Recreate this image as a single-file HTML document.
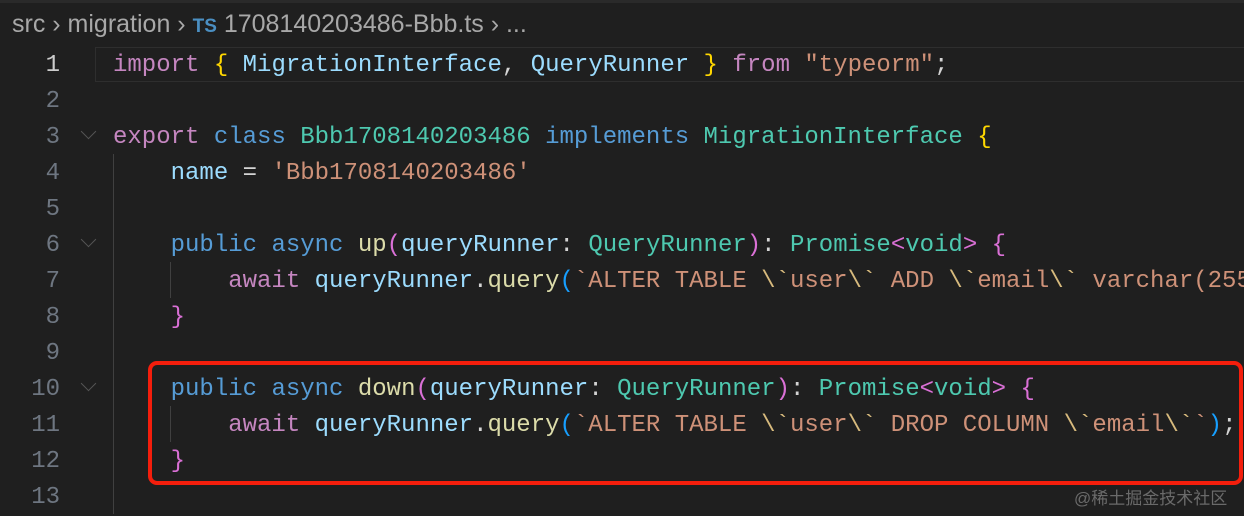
<!DOCTYPE html><html><head><style>
body{margin:0;width:1244px;height:514px;background:#1f1f1f;overflow:hidden;position:relative;font-family:"Liberation Mono",monospace}
.bc{position:absolute;left:12px;top:10px;font:25px "Liberation Sans",sans-serif;color:#a8a8a8;white-space:pre}
.ts{color:#4b8fc2;font-weight:bold;font-size:19px}
.ln{position:absolute;left:0;width:60px;text-align:right;font-size:24px;color:#6e7681;line-height:36px}
.code{position:absolute;left:113px;font-size:24px;line-height:36px;white-space:pre;color:#d4d4d4}
.k{color:#c586c0}.b{color:#569cd6}.t{color:#4ec9b0}.v{color:#9cdcfe}.f{color:#dcdcaa}.s{color:#ce9178}.y{color:#ffd700}.p{color:#da70d6}.q{color:#179fff}.e{color:#d7ba7d}
.guide{position:absolute;width:1px;background:#404040}
.chev{position:absolute;left:83px;width:10px;height:10px;border-right:1.5px solid #555;border-bottom:1.5px solid #555;transform:rotate(45deg)}
</style></head><body>
<div style="position:absolute;left:0;top:0;width:1244px;height:3px;background:#2a2a2a"></div>
<div class="bc">src › migration › <span class="ts">TS</span> 1708140203486-Bbb.ts › ...</div>
<div style="position:absolute;left:95px;top:47px;width:1149px;height:33px;border:1px solid #2e2e2e"></div>
<div class="ln" style="top:48px"><span style="color:#ccc">1</span><br>2<br>3<br>4<br>5<br>6<br>7<br>8<br>9<br>10<br>11<br>12<br>13</div>
<div class="chev" style="top:126px"></div><div class="chev" style="top:234px"></div><div class="chev" style="top:378px"></div>
<div class="guide" style="left:113px;top:154px;height:360px"></div>
<div class="guide" style="left:170px;top:262px;height:36px"></div>
<div class="guide" style="left:170px;top:406px;height:36px"></div>
<div class="code" style="top:48px"><span class="k">import</span> <span class="y">{</span> <span class="v">MigrationInterface</span>, <span class="v">QueryRunner</span> <span class="y">}</span> <span class="k">from</span> <span class="s">"typeorm"</span>;

<span class="k">export</span> <span class="b">class</span> <span class="t">Bbb1708140203486</span> <span class="b">implements</span> <span class="t">MigrationInterface</span> <span class="y">{</span>
    <span class="v">name</span> = <span class="s">'Bbb1708140203486'</span>

    <span class="b">public</span> <span class="b">async</span> <span class="f">up</span><span class="p">(</span><span class="v">queryRunner</span>: <span class="t">QueryRunner</span><span class="p">)</span>: <span class="t">Promise</span><span class="p">&lt;</span><span class="t">void</span><span class="p">&gt;</span> <span class="p">{</span>
        <span class="k">await</span> <span class="v">queryRunner</span>.<span class="f">query</span><span class="q">(</span><span class="s">`ALTER TABLE </span><span class="e">\`</span><span class="s">user</span><span class="e">\`</span><span class="s"> ADD </span><span class="e">\`</span><span class="s">email</span><span class="e">\`</span><span class="s"> varchar(255)</span>
    <span class="p">}</span>

    <span class="b">public</span> <span class="b">async</span> <span class="f">down</span><span class="p">(</span><span class="v">queryRunner</span>: <span class="t">QueryRunner</span><span class="p">)</span>: <span class="t">Promise</span><span class="p">&lt;</span><span class="t">void</span><span class="p">&gt;</span> <span class="p">{</span>
        <span class="k">await</span> <span class="v">queryRunner</span>.<span class="f">query</span><span class="q">(</span><span class="s">`ALTER TABLE </span><span class="e">\`</span><span class="s">user</span><span class="e">\`</span><span class="s"> DROP COLUMN </span><span class="e">\`</span><span class="s">email</span><span class="e">\`</span><span class="s">`</span><span class="q">)</span>;
    <span class="p">}</span>
</div>
<div style="position:absolute;left:148px;top:361px;width:1087px;height:116px;border:4px solid #f41e0c;border-radius:9px"></div>
<div style="position:absolute;left:1074px;top:484px;font:17px 'Liberation Sans','Noto Sans CJK SC',sans-serif;color:#6a6a6a">@稀土掘金技术社区</div>
</body></html>
